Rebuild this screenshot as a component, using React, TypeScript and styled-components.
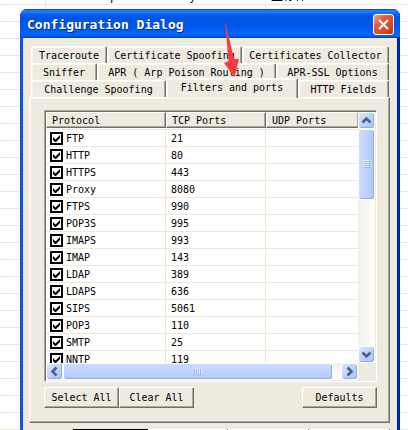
import React from "react";
import styled, { createGlobalStyle, css } from "styled-components";

const face = "#ece9d8";
const paper = "#eeeadf";
const shade = "#aca899";
const dark = "#716f64";

const Global = createGlobalStyle`
  * { box-sizing: border-box; }
  body {
    margin: 0;
    background: #fff;
    color: #000;
    font: 10px/16px "DejaVu Sans Mono", monospace;
  }
  button { font: inherit; color: inherit; padding: 0; margin: 0; }
`;

const Desktop = styled.div`
  height: 100vh;
  overflow: hidden;
  display: flex;
  flex-direction: column;
  background: repeating-linear-gradient(to bottom, transparent 0 4px, ${face} 4px 5px, transparent 5px 17px);
`;

const SheetRow = styled.div`
  flex: none;
  display: grid;
  grid-template-columns: 46px 220px 1fr;
  height: 9px;
`;

const SheetCell = styled.div`
  display: flex;
  align-items: flex-end;
  gap: 72px;
  height: 9px;
  padding: 0 0 4px 5px;
  overflow: hidden;
  border-right: 1px solid ${face};
  font: 12px/16px "Liberation Mono", "Noto Sans CJK SC", monospace;
  &:nth-child(2) { padding-left: 64px; }
  &:last-child { border: 0; }
`;

const Dialog = styled.section`
  flex: 1 0 auto;
  margin: 0 8px 0 20px;
  background: ${paper};
  border-left: 3px solid #0a55ea;
  border-right: 3px solid #0024b8;
  border-radius: 7px 7px 0 0;
`;

const TitleBar = styled.header`
  display: flex;
  align-items: center;
  justify-content: space-between;
  height: 29px;
  margin: 0 -3px;
  padding: 2px 6px 0 7px;
  border-radius: 7px 7px 0 0;
  background: linear-gradient(to bottom, #0842b8 0, #2d83f6 2px, #0a62ee 5px, #0054e0 9px, #0058ea 18px, #0066ff 25px, #005df0 27px, #0040c4 29px);
`;

const Title = styled.h1`
  margin: 0;
  color: #fff;
  font: bold 13px/18px "DejaVu Sans Mono", monospace;
  text-shadow: 1px 1px 0 #0a2a80;
`;

const Close = styled.button`
  display: grid;
  place-items: center;
  width: 21px;
  height: 21px;
  border: 1px solid #fff;
  border-radius: 3px;
  background: linear-gradient(135deg, #f0a088 0, #e2593a 35%, #d8441c 75%, #b8350f 100%);
`;

const Content = styled.div`
  padding: 8px 7px 0 6px;
`;

const TabRow = styled.div`
  display: flex;
  height: 17px;
  padding: 0 1px 0 2px;
`;

const Tab = styled.button<{ $basis: number; $active?: boolean }>`
  flex: 1 1 ${(p) => p.$basis}px;
  height: 17px;
  padding-top: 2px;
  line-height: 14px;
  white-space: nowrap;
  background: ${paper};
  border: 0;
  border-top: 1px solid #fff;
  border-left: 1px solid #fff;
  border-right: 1px solid ${dark};
  border-radius: 2px 2px 0 0;
  box-shadow: inset -1px 0 0 ${shade}, inset 1px 1px 0 #f8f6ee;
  ${(p) => p.$active && css`
    position: relative;
    height: 20px;
    margin-top: -2px;
    padding-bottom: 3px;
  `}
`;

const Panel = styled.div`
  padding: 12px 12px 14px 14px;
  border: 1px solid;
  border-color: #fff ${dark} ${dark} #fff;
  box-shadow: inset -1px -1px 0 ${shade}, inset 1px 1px 0 #f8f6ee;
`;

const ListBox = styled.div`
  display: grid;
  grid-template-columns: 1fr 17px;
  grid-template-rows: 251px 17px;
  border: 1px solid;
  border-color: ${shade} #fff #fff ${shade};
  box-shadow: inset 1px 1px 0 ${dark};
  padding: 1px;
`;

const Viewport = styled.div`
  overflow: hidden;
  background: #fff;
`;

const Table = styled.table`
  width: 100%;
  table-layout: fixed;
  border-collapse: separate;
  border-spacing: 0;
`;

const Head = styled.th<{ $width?: number }>`
  width: ${(p) => (p.$width ? `${p.$width}px` : "auto")};
  height: 16px;
  padding: 2px 0 0 5px;
  text-align: left;
  font-weight: normal;
  line-height: 12px;
  background: ${paper};
  border-left: 1px solid #fff;
  border-top: 1px solid #fff;
  border-right: 1px solid ${dark};
  border-bottom: 1px solid ${dark};
  box-shadow: inset -1px -1px 0 ${shade};
  &:last-child { border-right: 0; }
`;

const Cell = styled.td`
  height: 17px;
  padding: 2px 0 0 5px;
  line-height: 14px;
  border-bottom: 1px solid ${face};
  border-right: 1px solid ${face};
  &:first-child { padding-left: 4px; }
  &:last-child { border-right: 0; }
`;

const Spacer = styled.td`
  height: 2px;
  padding: 0;
  border-bottom: 1px solid ${face};
`;

const CheckLabel = styled.label`
  display: grid;
  grid-template-columns: 13px 1fr;
  column-gap: 3px;
  align-items: start;
  height: 14px;
  svg { grid-area: 1 / 1; pointer-events: none; }
  input:not(:checked) + svg { display: none; }
`;

const Box = styled.input`
  grid-area: 1 / 1;
  appearance: none;
  width: 13px;
  height: 13px;
  margin: 0;
  background: #fff;
  border: 2px solid #000;
`;

const Bar = styled.div<{ $horizontal?: boolean }>`
  display: flex;
  flex-direction: ${(p) => (p.$horizontal ? "row" : "column")};
  justify-content: space-between;
  background: linear-gradient(${(p) => (p.$horizontal ? "to bottom" : "to right")}, #f0efe8, #fefefb);
`;

const BarButton = styled.button`
  flex: none;
  display: grid;
  place-items: center;
  width: 17px;
  height: 17px;
  border: 1px solid #fff;
  border-radius: 3px;
  background: linear-gradient(135deg, #dbe6ff, #b9cdfb 60%, #aec4f5);
  box-shadow: inset -1px -1px 0 #8fabe0;
`;

const Track = styled.div<{ $horizontal?: boolean }>`
  flex: 1;
  display: flex;
  flex-direction: ${(p) => (p.$horizontal ? "row" : "column")};
`;

const Thumb = styled.div<{ $horizontal?: boolean }>`
  flex: 0 0 ${(p) => (p.$horizontal ? "97%" : "71px")};
  display: grid;
  place-items: center;
  border: 1px solid #fff;
  border-radius: 3px;
  background: linear-gradient(${(p) => (p.$horizontal ? "to bottom" : "to right")}, #cbdafe, #bccffc 70%, #b0c6f8);
  box-shadow: inset -1px -1px 0 #8fabe0;
`;

const Corner = styled.div`
  background: ${paper};
`;

const Actions = styled.div`
  display: flex;
  margin-top: 5px;
`;

const Action = styled.button<{ $end?: boolean }>`
  width: 75px;
  height: 21px;
  margin-left: ${(p) => (p.$end ? "auto" : "0")};
  background: ${paper};
  border: 1px solid;
  border-color: #fff ${dark} ${dark} #fff;
  box-shadow: inset -1px -1px 0 ${shade};
`;

const Footer = styled.footer`
  display: grid;
  grid-template-columns: 75px 80px 81px 81px;
  height: 8px;
  padding: 6px 0 0 50px;
`;

const FooterEdge = styled.div<{ $focus?: boolean }>`
  height: 2px;
  background: ${(p) => (p.$focus ? "#000" : "#fff")};
  border-right: ${(p) => (p.$focus ? "0" : `1px solid ${dark}`)};
`;

const Arrow = styled.svg`
  position: absolute;
  left: 224px;
  top: 20px;
  pointer-events: none;
`;

const tabRows = [
  [
    { name: "Traceroute", basis: 76 },
    { name: "Certificate Spoofing", basis: 135 },
    { name: "Certificates Collector", basis: 147 },
  ],
  [
    { name: "Sniffer", basis: 66 },
    { name: "APR ( Arp Poison Routing )", basis: 179 },
    { name: "APR-SSL Options", basis: 113 },
  ],
  [
    { name: "Challenge Spoofing", basis: 135 },
    { name: "Filters and ports", basis: 132 },
    { name: "HTTP Fields", basis: 91 },
  ],
];

const ports: [string, string][] = [
  ["FTP", "21"],
  ["HTTP", "80"],
  ["HTTPS", "443"],
  ["Proxy", "8080"],
  ["FTPS", "990"],
  ["POP3S", "995"],
  ["IMAPS", "993"],
  ["IMAP", "143"],
  ["LDAP", "389"],
  ["LDAPS", "636"],
  ["SIPS", "5061"],
  ["POP3", "110"],
  ["SMTP", "25"],
  ["NNTP", "119"],
];

const turns = { up: 0, right: 90, down: 180, left: 270 };

function Chevron({ to }: { to: keyof typeof turns }) {
  return (
    <svg width="11" height="11" viewBox="0 0 11 11" aria-hidden="true">
      <path d="M1.5 7.5 5.5 3.5 9.5 7.5" fill="none" stroke="#4d6185" strokeWidth="2.6" transform={`rotate(${turns[to]} 5.5 5.5)`} />
    </svg>
  );
}

function Grip({ turned }: { turned?: boolean }) {
  return (
    <svg width="9" height="9" viewBox="0 0 9 9" aria-hidden="true" shapeRendering="crispEdges">
      <g transform={turned ? "rotate(90 4.5 4.5)" : undefined}>
        <path d="M1 .5h6M1 2.5h6M1 4.5h6M1 6.5h6" stroke="#eef4fe" />
        <path d="M2 1.5h6M2 3.5h6M2 5.5h6M2 7.5h6" stroke="#8cb0f8" />
      </g>
    </svg>
  );
}

export default function App() {
  return (
    <Desktop>
      <Global />
      <SheetRow>
        <SheetCell />
        <SheetCell><span>p</span><span>y</span></SheetCell>
        <SheetCell>主标体</SheetCell>
      </SheetRow>
      <Dialog role="dialog" aria-labelledby="dialog-title">
        <TitleBar>
          <Title id="dialog-title">Configuration Dialog</Title>
          <Close type="button" aria-label="Close">
            <svg width="13" height="13" viewBox="0 0 13 13" aria-hidden="true">
              <path d="M2 2 11 11M11 2 2 11" stroke="#fff" strokeWidth="2.2" />
            </svg>
          </Close>
        </TitleBar>
        <Content>
          <div role="tablist">
            {tabRows.map((row) => (
              <TabRow key={row[0].name}>
                {row.map((tab) => {
                  const active = tab.name === "Filters and ports";
                  return (
                    <Tab key={tab.name} type="button" role="tab" aria-selected={active} $basis={tab.basis} $active={active}>
                      {tab.name}
                    </Tab>
                  );
                })}
              </TabRow>
            ))}
          </div>
          <Panel role="tabpanel">
            <ListBox>
              <Viewport>
                <Table>
                  <thead>
                    <tr>
                      <Head $width={120}>Protocol</Head>
                      <Head $width={100}>TCP Ports</Head>
                      <Head>UDP Ports</Head>
                    </tr>
                  </thead>
                  <tbody>
                    <tr aria-hidden="true"><Spacer colSpan={3} /></tr>
                    {ports.map(([name, tcp]) => (
                      <tr key={name}>
                        <Cell>
                          <CheckLabel>
                            <Box type="checkbox" defaultChecked />
                            <svg width="13" height="13" viewBox="0 0 13 13" aria-hidden="true">
                              <path d="M3 5v3l2 2h1l4-4V3L5.500 7.500Z" fill="#000" />
                            </svg>
                            {name}
                          </CheckLabel>
                        </Cell>
                        <Cell>{tcp}</Cell>
                        <Cell />
                      </tr>
                    ))}
                  </tbody>
                </Table>
              </Viewport>
              <Bar>
                <BarButton type="button" aria-label="Scroll up"><Chevron to="up" /></BarButton>
                <Track><Thumb><Grip /></Thumb></Track>
                <BarButton type="button" aria-label="Scroll down"><Chevron to="down" /></BarButton>
              </Bar>
              <Bar $horizontal>
                <BarButton type="button" aria-label="Scroll left"><Chevron to="left" /></BarButton>
                <Track $horizontal><Thumb $horizontal><Grip turned /></Thumb></Track>
                <BarButton type="button" aria-label="Scroll right"><Chevron to="right" /></BarButton>
              </Bar>
              <Corner />
            </ListBox>
            <Actions>
              <Action type="button">Select All</Action>
              <Action type="button">Clear All</Action>
              <Action type="button" $end>Defaults</Action>
            </Actions>
          </Panel>
        </Content>
        <Footer>
          <FooterEdge $focus />
          <FooterEdge />
          <FooterEdge />
          <FooterEdge />
        </Footer>
      </Dialog>
      <Arrow width="16" height="58" viewBox="0 0 16 58" aria-hidden="true">
        <path d="M1 .5 10 39 15 39 10.500 57 0 43 4.500 41Z" fill="#fb3b3b" />
      </Arrow>
    </Desktop>
  );
}
